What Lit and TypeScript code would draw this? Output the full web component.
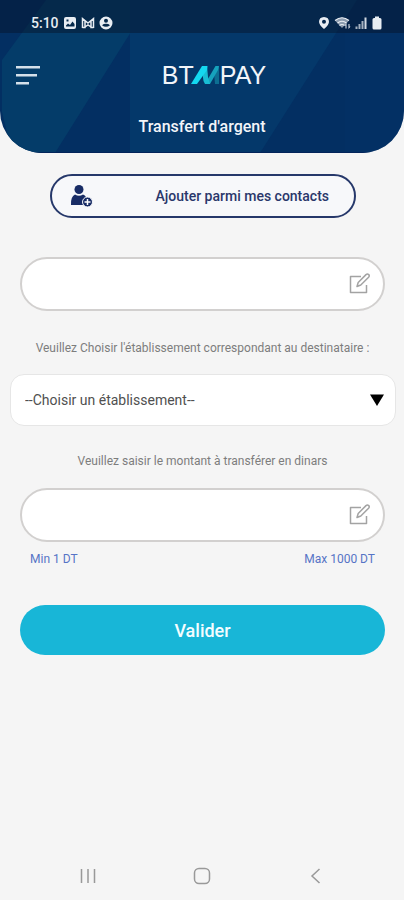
import { LitElement, html, css, svg } from "lit";
import { customElement, property, state } from "lit/decorators.js";

const editIcon = svg`<path d="M13 3.5H2.5V19.5H18.5V12" /><path d="M9 13.500L10.200 9.500L18 1.600Q19.400 0.400 20.700 1.600Q21.800 2.900 20.600 4.200L12.800 12Z" />`;

@customElement("edit-field")
class EditField extends LitElement {
  @property() label = "";

  static styles = css`
    :host { display: block; }
    .field {
      display: flex;
      align-items: center;
      box-sizing: border-box;
      height: 54px;
      padding: 0 12px 0 24px;
      border: 2px solid #d2d0cf;
      border-radius: 27px;
      background: #fff;
    }
    .input {
      flex: 1;
      min-width: 0;
      height: 48px;
      border: 0;
      outline: 0;
      background: transparent;
      font: 16px Roboto, sans-serif;
      color: #333;
    }
    .icon { width: 23px; height: 23px; fill: none; stroke: #a3a3a3; stroke-width: 1.5; stroke-linejoin: round; }
  `;

  render() {
    return html`<label class="field">
      <input class="input" type="text" aria-label=${this.label} />
      <svg class="icon" viewBox="0 0 23 23" aria-hidden="true">${editIcon}</svg>
    </label>`;
  }
}

@customElement("status-bar")
class StatusBar extends LitElement {
  static styles = css`
    :host {
      display: flex;
      justify-content: space-between;
      align-items: center;
      box-sizing: border-box;
      height: 33px;
      padding: 13px 21px 0 31px;
      background: rgba(5, 22, 45, 0.5);
      color: #e8edf3;
      font: 500 14px/20px Roboto, sans-serif;
    }
    .group { display: flex; align-items: center; gap: 4px; }
    .icon { display: block; height: 14px; fill: #e8edf3; }
    .line { fill: none; stroke: #e8edf3; }
  `;

  render() {
    return html`
      <div class="group">
        <span>5:10</span>
        <svg class="icon" width="14" height="14" viewBox="0 0 14 14"><path fill-rule="evenodd" d="M3 1H11Q13 1 13 3V11Q13 13 11 13H3Q1 13 1 11V3Q1 1 3 1ZM3 10.500H11.500V8L9.500 5.500L7 9L5 7.500L3 9.500ZM3.500 3.500V5.500H5.500V3.500Z" /></svg>
        <svg class="icon" width="14" height="14" viewBox="0 0 14 14"><path class="line" stroke-width="1.500" d="M1.500 12V2.500L7 7L12.500 2.500V12M1.500 11.500H4V5M12.500 11.500H10V5M4 11L7 9L10 11" /></svg>
        <svg class="icon" width="14" height="14" viewBox="0 0 14 14"><path fill-rule="evenodd" d="M7 0.500A6.500 6.500 0 1 1 7 13.500A6.500 6.500 0 0 1 7 0.500ZM7 2.700A2 2 0 1 0 7 6.700A2 2 0 0 0 7 2.700ZM3 9.200Q7 12.500 11 9.200Q9.500 7.800 7 7.800Q4.500 7.800 3 9.200Z" /></svg>
      </div>
      <div class="group">
        <svg class="icon" width="12" height="14" viewBox="0 0 12 14"><path fill-rule="evenodd" d="M6 1Q11 1.200 11 6Q10.500 9.500 6 13Q1.500 9.500 1 6Q1 1.200 6 1ZM6 3.700A2 2 0 1 0 6 7.700A2 2 0 0 0 6 3.700Z" /></svg>
        <svg class="icon" width="17" height="14" viewBox="0 0 17 14"><path opacity="0.600" d="M1 4.500Q8 -1.500 15 4.500L8 12Z" /><path class="line" stroke-width="1.200" d="M1 4.500Q8 -1 15 4.500M3.500 7Q8 3.500 12.500 7M5.500 9.500Q8 7.500 10.500 9.500" /><path d="M10.500 9.500L12.500 7V12.500H11.500V9.500ZM16.500 10.500L14.500 13V8H15.500V10.500Z" /></svg>
        <svg class="icon" width="12" height="14" viewBox="0 0 12 14"><path opacity="0.700" d="M0.500 13V10.500H2.500V13ZM3.500 13V8H5.500V13ZM6.500 13V5H8.500V13Z" /><path opacity="0.900" d="M9.500 1.500H11.500V13H9.500Z" /></svg>
        <svg class="icon" width="12" height="14" viewBox="0 0 12 14"><path d="M4 0.500H8V2H9Q10.500 2 10.500 3.500V12Q10.500 13.500 9 13.500H3Q1.500 13.500 1.500 12V3.500Q1.500 2 3 2H4Z" /></svg>
      </div>
    `;
  }
}

@customElement("app-root")
class AppRoot extends LitElement {
  @state() private bank = "";

  static styles = css`
    :host {
      display: flex;
      flex-direction: column;
      min-height: 100vh;
      background: #f5f5f5;
      font-family: Roboto, sans-serif;
    }
    button { font-family: inherit; cursor: pointer; }
    .header {
      position: relative;
      overflow: hidden;
      border-radius: 0 0 42px 42px;
      background: #032f62;
      color: #f2f5f9;
      padding-bottom: 14px;
    }
    .pattern { position: absolute; inset: 0; width: 100%; height: 100%; }
    .header-content { position: relative; }
    .bar {
      display: grid;
      grid-template-columns: 40px 1fr 40px;
      align-items: center;
      height: 44px;
      margin: 20px 0 18px;
      padding: 0 8px;
    }
    .menu { display: flex; justify-content: center; padding: 8px 0; border: 0; background: none; }
    .brand { display: flex; justify-content: center; align-items: center; padding-left: 24px; font: 25px/32px "Liberation Sans", sans-serif; }
    .mark { width: 30px; height: 20px; margin: 0 -1px 0 -3px; }
    .title { margin: 0; text-align: center; font-weight: 500; font-size: 16px; line-height: 24px; }
    .main { display: flex; flex-direction: column; padding: 21px 19px 0 20px; }
    .contacts {
      display: flex;
      align-items: center;
      justify-content: space-between;
      height: 44px;
      margin: 0 29px 0 30px;
      padding: 0 25px 0 18px;
      border: 2px solid #26386a;
      border-radius: 22px;
      background: #f7f8fa;
      color: #2a376a;
      font-size: 14px;
      font-weight: 500;
    }
    .person { width: 23px; height: 24px; }
    .first { margin-top: 39px; }
    .hint { display: block; margin: 27px 0 16px; text-align: center; color: #7d7d7d; font-size: 12px; line-height: 20px; }
    .amount-hint { margin-top: 25px; margin-bottom: 17px; }
    .select-box { display: grid; align-items: center; margin: 0 -11px 0 -10px; }
    .select {
      grid-area: 1 / 1;
      appearance: none;
      width: 100%;
      height: 52px;
      padding: 0 40px 0 14px;
      border: 1px solid #e6e6e6;
      border-radius: 14px;
      background: #fff;
      color: #505050;
      font: 14px Roboto, sans-serif;
    }
    .arrow { grid-area: 1 / 1; justify-self: end; margin-right: 12px; pointer-events: none; }
    .limits { display: flex; justify-content: space-between; padding: 0 10px; margin: 7px 0 36px; color: #5574c6; font-size: 12px; line-height: 20px; }
    .submit {
      height: 50px;
      border: 0;
      border-radius: 25px;
      background: #18b6d7;
      color: #f4fdff;
      font-size: 18px;
      font-weight: 500;
    }
    .nav { display: grid; grid-template-columns: repeat(3, 1fr); margin-top: auto; padding: 0 31px 8px; }
    .nav-button { display: flex; justify-content: center; padding: 6px 0; border: 0; background: none; }
    .nav-icon { width: 20px; height: 20px; fill: none; stroke: #999; stroke-width: 1.5; }
  `;

  private pick(event: Event) {
    this.bank = (event.target as HTMLSelectElement).value;
  }

  render() {
    return html`
      <header class="header">
        <svg class="pattern" viewBox="0 0 404 153" preserveAspectRatio="none" aria-hidden="true">
          <path fill="#043c69" d="M46 0H151L55 153H12L2 112V60Z" />
          <path fill="#04386a" d="M130 0H357L260 153H130Z" />
          <path fill="#04336a" d="M345 33H404V153H345Z" opacity="0.4" />
          <path fill="#03245a" d="M0 152H404V153H0Z" />
        </svg>
        <div class="header-content">
          <status-bar></status-bar>
          <div class="bar">
            <button class="menu" aria-label="Menu">
              <svg width="24" height="20" viewBox="0 0 24 20" fill="#d5e0ea"><path d="M0 1H24V3.500H0ZM0 9H21V11.500H0ZM0 17H13V19.500H0Z" /></svg>
            </button>
            <div class="brand">
              <span>BT</span>
              <svg class="mark" viewBox="0 0 30 20" aria-hidden="true">
                <path fill="#0d6f92" d="M23 8L28 1V19H24Z" />
                <path fill="#16a3bd" d="M14 19L24.500 1H28L27 5L19 19Z" />
                <path fill="#18bdd4" d="M11 6L16 1L17 12L19 19H14L12.500 16Z" />
                <path fill="#14d8f0" d="M0 19L11 1H16.500L16 5L6 19Z" />
              </svg>
              <span>PAY</span>
            </div>
          </div>
          <h1 class="title">Transfert d'argent</h1>
        </div>
      </header>
      <main class="main">
        <button class="contacts">
          <svg class="person" viewBox="0 0 23 24" fill="#182c65" aria-hidden="true">
            <circle cx="9" cy="5.500" r="4.500" />
            <path d="M5 10.500Q9 13 13 10.500Q17 12 17.500 18V21H1Q0.500 12.500 5 10.500Z" />
            <circle cx="17.500" cy="18" r="5" stroke="#f7f8fa" stroke-width="1" />
            <path d="M17.500 15V21M14.500 18H20.500" stroke="#fff" stroke-width="1.500" />
          </svg>
          <span>Ajouter parmi mes contacts</span>
        </button>
        <edit-field class="first" label="Destinataire"></edit-field>
        <label class="hint" for="bank">Veuillez Choisir l'établissement correspondant au destinataire :</label>
        <div class="select-box">
          <select class="select" id="bank" .value=${this.bank} @change=${this.pick}>
            <option value="">--Choisir un établissement--</option>
          </select>
          <svg class="arrow" width="14" height="12" viewBox="0 0 14 12" aria-hidden="true"><path d="M0 0.500H14L7 12Z" /></svg>
        </div>
        <span class="hint amount-hint">Veuillez saisir le montant à transférer en dinars</span>
        <edit-field label="Montant à transférer en dinars"></edit-field>
        <div class="limits"><span>Min 1 DT</span><span>Max 1000 DT</span></div>
        <button class="submit">Valider</button>
      </main>
      <nav class="nav" aria-label="Navigation">
        <button class="nav-button" aria-label="Applications"><svg class="nav-icon" viewBox="0 0 20 20"><path d="M3.500 3V17M10 3V17M16.500 3V17" /></svg></button>
        <button class="nav-button" aria-label="Accueil"><svg class="nav-icon" viewBox="0 0 20 20"><rect x="2.500" y="2.500" width="15" height="15" rx="4.500" /></svg></button>
        <button class="nav-button" aria-label="Retour"><svg class="nav-icon" viewBox="0 0 20 20"><path d="M13.500 3L6 10L13.500 17" /></svg></button>
      </nav>
    `;
  }
}
